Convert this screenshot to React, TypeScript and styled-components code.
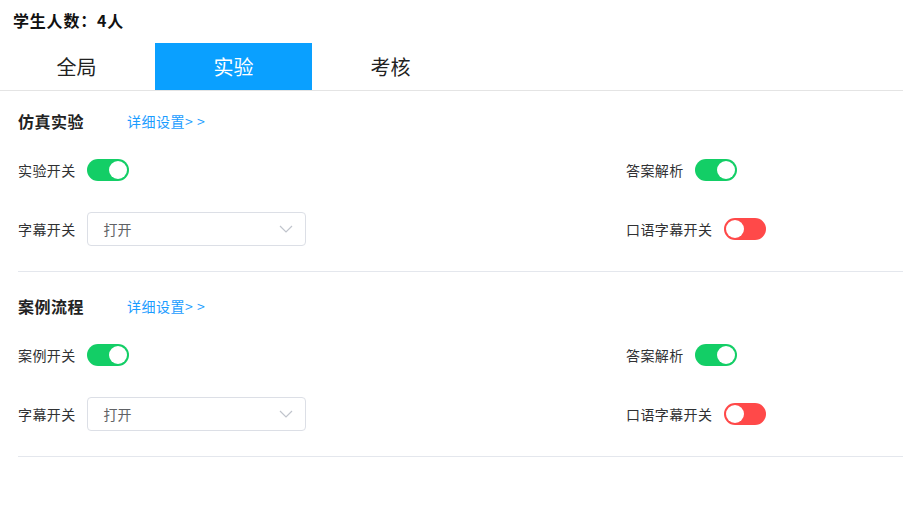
import React, { useState } from 'react';
import styled, { createGlobalStyle } from 'styled-components';

const GlobalStyle = createGlobalStyle`
  body {
    margin: 0;
    background: #fff;
    font-family: "Noto Sans CJK SC", "Liberation Sans", sans-serif;
    color: #303133;
  }
`;

type SectionData = {
  title: string;
  mainLabel: string;
};

const sections: SectionData[] = [
  { title: '仿真实验', mainLabel: '实验开关' },
  { title: '案例流程', mainLabel: '案例开关' },
];

const tabs = ['全局', '实验', '考核'];

export default function App() {
  const [active, setActive] = useState(1);

  return (
    <Page>
      <GlobalStyle />
      <Title>学生人数：4人</Title>
      <TabBar>
        {tabs.map((t, i) => (
          <Tab key={t} $active={i === active} onClick={() => setActive(i)}>
            {t}
          </Tab>
        ))}
      </TabBar>
      {sections.map((s, i) => (
        <Section key={s.title} $first={i === 0}>
          <SectionHead>
            <Heading>{s.title}</Heading>
            <DetailLink>详细设置&gt; &gt;</DetailLink>
          </SectionHead>
          <Grid>
            <Field>
              <Label>{s.mainLabel}</Label>
              <Switch $on />
            </Field>
            <Field>
              <Label>答案解析</Label>
              <Switch $on />
            </Field>
            <Field>
              <Label>字幕开关</Label>
              <Select>
                <span>打开</span>
                <svg width="14" height="8" viewBox="0 0 14 8">
                  <path d="M1 1l6 6 6-6" fill="none" stroke="#c0c4cc" strokeWidth="1.2" />
                </svg>
              </Select>
            </Field>
            <Field>
              <Label $wide>口语字幕开关</Label>
              <Switch $on={false} />
            </Field>
          </Grid>
        </Section>
      ))}
    </Page>
  );
}

const Page = styled.div`
  width: 903px;
`;

const Title = styled.div`
  padding: 9px 13px 0;
  font-size: 16px;
  line-height: 22px;
  font-weight: 700;
  letter-spacing: 0.8px;
  color: #111;
`;

const TabBar = styled.div`
  display: flex;
  margin-top: 12px;
  margin-left: -2px;
  border-bottom: 1px solid #e4e4e4;
`;

const Tab = styled.div<{ $active?: boolean }>`
  width: 157px;
  height: 47px;
  display: flex;
  align-items: center;
  justify-content: center;
  font-size: 20px;
  cursor: pointer;
  background: ${(p) => (p.$active ? '#0aa0ff' : 'transparent')};
  color: ${(p) => (p.$active ? '#fff' : '#222')};
`;

const Section = styled.div<{ $first?: boolean }>`
  margin-left: 18px;
  padding: ${(p) => (p.$first ? '15px' : '19px')} 0 25px;
  border-bottom: 1px solid #e4e7ed;
`;

const SectionHead = styled.div`
  display: flex;
  align-items: center;
  height: 30px;
  gap: 43px;
`;

const Heading = styled.div`
  font-size: 16px;
  font-weight: 700;
  letter-spacing: 0.5px;
  color: #222;
`;

const DetailLink = styled.a`
  font-size: 14px;
  letter-spacing: 0.5px;
  color: #1a9cff;
  cursor: pointer;
`;

const Grid = styled.div`
  display: grid;
  grid-template-columns: 608px 1fr;
  row-gap: 25px;
  margin-top: 17px;
`;

const Field = styled.div`
  display: flex;
  align-items: center;
  height: 34px;
`;

const Label = styled.span<{ $wide?: boolean }>`
  font-size: 14px;
  letter-spacing: 0.4px;
  color: #303133;
  margin-right: ${(p) => (p.$wide ? '12px' : '11px')};
`;

const Switch = styled.span<{ $on?: boolean }>`
  position: relative;
  display: inline-block;
  width: 42px;
  height: 22px;
  border-radius: 11px;
  background: ${(p) => (p.$on ? '#13ce66' : '#ff4949')};

  &::after {
    content: '';
    position: absolute;
    top: 2px;
    left: ${(p) => (p.$on ? '22px' : '2px')};
    width: 18px;
    height: 18px;
    border-radius: 50%;
    background: #fff;
  }
`;

const Select = styled.div`
  box-sizing: border-box;
  width: 219px;
  height: 34px;
  border: 1px solid #dcdfe6;
  border-radius: 4px;
  display: flex;
  align-items: center;
  justify-content: space-between;
  padding: 0 12px 0 16px;
  font-size: 14px;
  color: #606266;
`;
